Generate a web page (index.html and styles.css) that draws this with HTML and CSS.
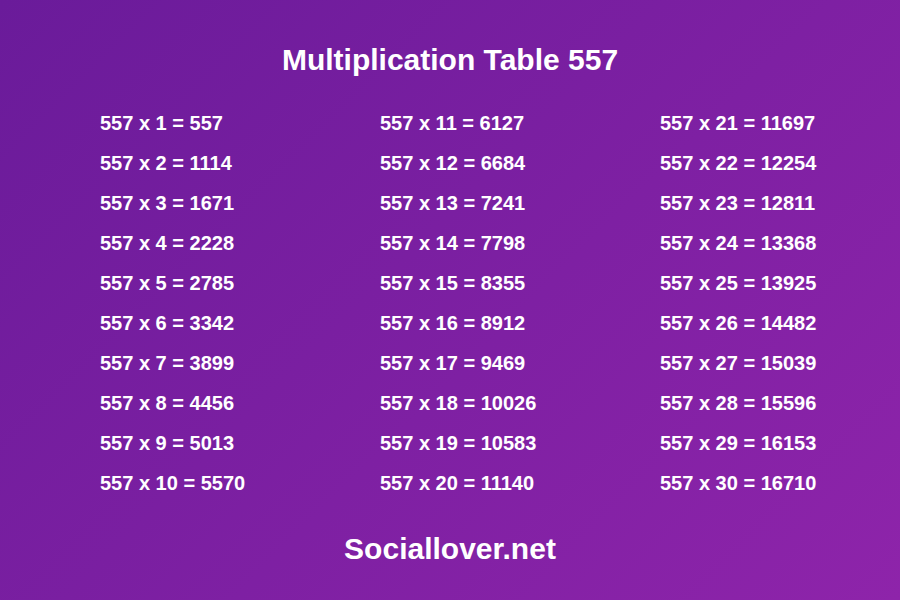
FILE: index.html
```html
<!DOCTYPE html>
<html>
<head>
<meta charset="utf-8">
<link rel="stylesheet" href="styles.css">
</head>
<body>
<div class="page">
  <h1 class="title">Multiplication Table 557</h1>
  <div class="table">
    <div class="col">
      <div class="row">557 x 1 = 557</div>
      <div class="row">557 x 2 = 1114</div>
      <div class="row">557 x 3 = 1671</div>
      <div class="row">557 x 4 = 2228</div>
      <div class="row">557 x 5 = 2785</div>
      <div class="row">557 x 6 = 3342</div>
      <div class="row">557 x 7 = 3899</div>
      <div class="row">557 x 8 = 4456</div>
      <div class="row">557 x 9 = 5013</div>
      <div class="row">557 x 10 = 5570</div>
    </div>
    <div class="col">
      <div class="row">557 x 11 = 6127</div>
      <div class="row">557 x 12 = 6684</div>
      <div class="row">557 x 13 = 7241</div>
      <div class="row">557 x 14 = 7798</div>
      <div class="row">557 x 15 = 8355</div>
      <div class="row">557 x 16 = 8912</div>
      <div class="row">557 x 17 = 9469</div>
      <div class="row">557 x 18 = 10026</div>
      <div class="row">557 x 19 = 10583</div>
      <div class="row">557 x 20 = 11140</div>
    </div>
    <div class="col">
      <div class="row">557 x 21 = 11697</div>
      <div class="row">557 x 22 = 12254</div>
      <div class="row">557 x 23 = 12811</div>
      <div class="row">557 x 24 = 13368</div>
      <div class="row">557 x 25 = 13925</div>
      <div class="row">557 x 26 = 14482</div>
      <div class="row">557 x 27 = 15039</div>
      <div class="row">557 x 28 = 15596</div>
      <div class="row">557 x 29 = 16153</div>
      <div class="row">557 x 30 = 16710</div>
    </div>
  </div>
  <div class="footer">Sociallover.net</div>
</div>
</body>
</html>
```
FILE: styles.css
```css
html, body {
  margin: 0;
  padding: 0;
}
body {
  width: 900px;
  height: 600px;
  overflow: hidden;
  background: linear-gradient(135deg, #6a1b9a 0%, #8e24aa 100%);
  font-family: "Liberation Sans", Arial, sans-serif;
  color: #ffffff;
}
.page {
  display: flex;
  flex-direction: column;
  padding-top: 40px;
}
.title {
  margin: 0;
  font-size: 30px;
  line-height: 40px;
  font-weight: bold;
  text-align: center;
}
.table {
  display: grid;
  grid-template-columns: 280px 280px 240px;
  margin-top: 23px;
  padding-left: 100px;
}
.col {
  display: flex;
  flex-direction: column;
}
.row {
  font-size: 20px;
  font-weight: bold;
  line-height: 40px;
  white-space: nowrap;
}
.footer {
  margin-top: 26px;
  font-size: 30px;
  font-weight: bold;
  line-height: 40px;
  text-align: center;
}
```
